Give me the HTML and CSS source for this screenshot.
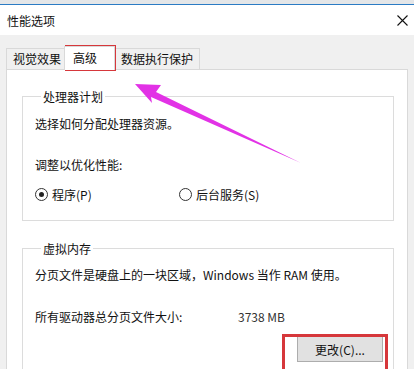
FILE: index.html
```html
<!DOCTYPE html>
<html lang="zh-CN">
<head>
  <meta charset="UTF-8" />
  <title>性能选项</title>
  <link rel="stylesheet" href="styles.css">
</head>
<body>

  <div class="window">
    <div class="titlebar">
      <span class="title">性能选项</span>
      <span class="close">
        <svg width="11" height="11" viewBox="0 0 11 11"><path d="M0.5 0.5 L10.5 10.5 M10.5 0.5 L0.5 10.5" stroke="#111" stroke-width="1.1"/></svg>
      </span>
    </div>

    <div class="content">
      <div class="tabs">
        <div class="tab">视觉效果</div>
        <div class="tab active">高级</div>
        <div class="tab">数据执行保护</div>
      </div>

      <div class="panel">
        <fieldset class="group cpu">
          <legend>处理器计划</legend>
          <p class="line">选择如何分配处理器资源。</p>
          <p class="line gap">调整以优化性能:</p>
          <div class="radios">
            <label class="radio"><span class="dot checked"></span>程序(P)</label>
            <label class="radio"><span class="dot"></span>后台服务(S)</label>
          </div>
        </fieldset>

        <fieldset class="group mem">
          <legend>虚拟内存</legend>
          <p class="line">分页文件是硬盘上的一块区域，Windows 当作 RAM 使用。</p>
          <div class="size-row">
            <span>所有驱动器总分页文件大小:</span>
            <span class="size">3738 MB</span>
          </div>
          <div class="btn-row">
            <button type="button" class="btn">更改(C)...</button>
          </div>
        </fieldset>
      </div>
    </div>
  </div>

  <!-- annotations drawn over the screenshot -->
  <div class="mark mark-tab"></div>
  <div class="mark mark-btn"></div>
  <svg class="arrow" width="414" height="369" viewBox="0 0 414 369">
    <polygon points="135,84 161,85 156,92 301,163 151,97 152,103" fill="#e232e6"/>
  </svg>

</body>
</html>
```

FILE: styles.css
```css
body {
  margin: 0;
  font-family: "Noto Sans CJK SC", "Liberation Sans", sans-serif;
  font-size: 12px;
  color: #111;
  background: #f0f0f0;
  width: 414px;
  height: 369px;
  overflow: hidden;
  position: relative;
}
.window {
  border-top: 4px solid #e4e6e8;
}
.titlebar {
  border-top: 1px solid #2b7bc4;
  background: #fff;
  height: 30px;
  display: flex;
  align-items: center;
  justify-content: space-between;
  padding: 0 6px 0 7px;
}
.close {
  display: flex;
}
.content {
  padding: 12px 6px 0 6px;
}
.tabs {
  display: flex;
  align-items: flex-end;
  height: 22px;
}
.tab {
  height: 20px;
  line-height: 20px;
  padding: 0 6px;
  border: 1px solid #d9d9d9;
  border-bottom: none;
  background: #f0f0f0;
  margin-right: -1px;
}
.tab:first-child {
  padding: 0 3px 0 6px;
}
.tab.active {
  background: #fff;
  height: 23px;
  line-height: 22px;
  padding: 0 17px 0 8px;
  margin-bottom: -1px;
  position: relative;
  z-index: 1;
}
.panel {
  background: #fff;
  border: 1px solid #d9d9d9;
  height: 320px;
  padding: 18px 13px 0 15px;
}
.group {
  border: 1px solid #dcdcdc;
  margin: 0;
  padding: 0 12px;
}
.group legend {
  padding: 0 2px;
  margin-left: 6px;
}
.line {
  margin: 0;
  line-height: 18px;
}
.cpu .line:first-of-type {
  margin-top: 10px;
}
.cpu .gap {
  margin-top: 23px;
}
.radios {
  display: flex;
  margin-top: 12px;
  margin-bottom: 17px;
}
.radio {
  display: flex;
  align-items: center;
  gap: 4px;
  width: 144px;
}
.dot {
  width: 11px;
  height: 11px;
  border: 1px solid #333;
  border-radius: 50%;
  position: relative;
  background: #fff;
}
.dot.checked::after {
  content: "";
  position: absolute;
  left: 3px;
  top: 3px;
  width: 5px;
  height: 5px;
  border-radius: 50%;
  background: #222;
}
.mem {
  margin-top: 19px;
  height: 140px;
}
.mem .line {
  margin-top: 9px;
}
.size-row {
  display: flex;
  margin-top: 24px;
  line-height: 18px;
}
.size-row .size {
  margin-left: auto;
  margin-right: 96px;
  color: #333;
}
.btn-row {
  display: flex;
  justify-content: flex-end;
  margin-top: 10px;
  margin-right: -2px;
}
.btn {
  font-family: inherit;
  font-size: 12px;
  width: 86px;
  height: 26px;
  background: #e1e1e1;
  border: 1px solid #adadad;
  color: #111;
}
.mark {
  position: absolute;
  border: 3px solid #d6373b;
}
.mark-tab {
  left: 65px;
  top: 45px;
  width: 45px;
  height: 20px;
}
.mark-btn {
  left: 282px;
  top: 334px;
  width: 100px;
  height: 40px;
}
.arrow {
  position: absolute;
  left: 0;
  top: 0;
}
```
